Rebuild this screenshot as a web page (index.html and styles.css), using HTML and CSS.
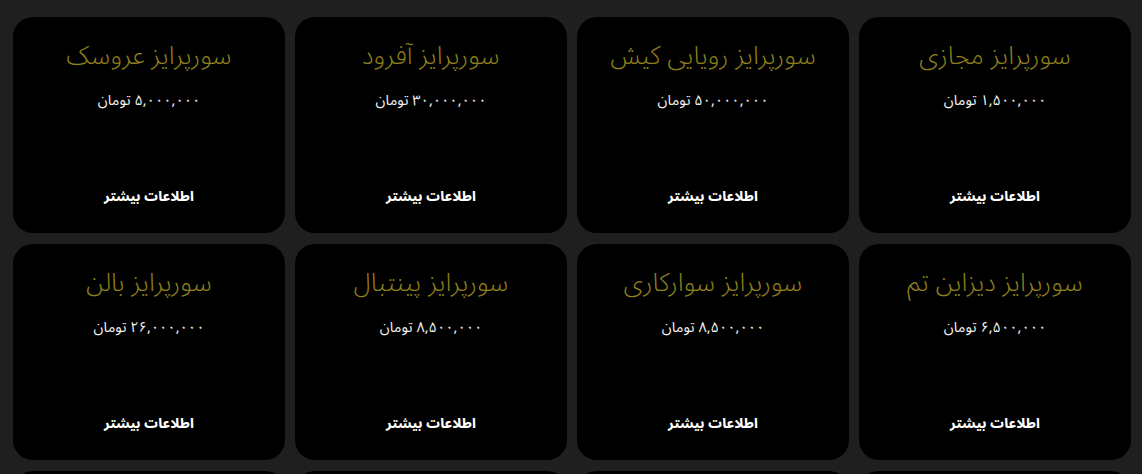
FILE: index.html
```html
<!DOCTYPE html>
<html lang="fa" dir="rtl">
<head>
<meta charset="utf-8">
<title>سورپرایز</title>
<link rel="stylesheet" href="styles.css">
</head>
<body>
<main class="grid">
  <div class="card"><h2 class="title">سورپرایز مجازی</h2><p class="price">۱,۵۰۰,۰۰۰ تومان</p><a class="more" href="#">اطلاعات بیشتر</a></div>
  <div class="card"><h2 class="title">سورپرایز رویایی کیش</h2><p class="price">۵۰,۰۰۰,۰۰۰ تومان</p><a class="more" href="#">اطلاعات بیشتر</a></div>
  <div class="card"><h2 class="title">سورپرایز آفرود</h2><p class="price">۳۰,۰۰۰,۰۰۰ تومان</p><a class="more" href="#">اطلاعات بیشتر</a></div>
  <div class="card"><h2 class="title">سورپرایز عروسک</h2><p class="price">۵,۰۰۰,۰۰۰ تومان</p><a class="more" href="#">اطلاعات بیشتر</a></div>
  <div class="card"><h2 class="title">سورپرایز دیزاین تم</h2><p class="price">۶,۵۰۰,۰۰۰ تومان</p><a class="more" href="#">اطلاعات بیشتر</a></div>
  <div class="card"><h2 class="title">سورپرایز سوارکاری</h2><p class="price">۸,۵۰۰,۰۰۰ تومان</p><a class="more" href="#">اطلاعات بیشتر</a></div>
  <div class="card"><h2 class="title">سورپرایز پینتبال</h2><p class="price">۸,۵۰۰,۰۰۰ تومان</p><a class="more" href="#">اطلاعات بیشتر</a></div>
  <div class="card"><h2 class="title">سورپرایز بالن</h2><p class="price">۲۶,۰۰۰,۰۰۰ تومان</p><a class="more" href="#">اطلاعات بیشتر</a></div>
  <div class="card"></div>
  <div class="card"></div>
  <div class="card"></div>
  <div class="card"></div>
</main>
</body>
</html>
```

FILE: styles.css
```css
html, body {
  margin: 0;
  padding: 0;
  background: #1f1f1f;
  overflow: hidden;
}
body {
  font-family: "Noto Sans Arabic", "DejaVu Sans", sans-serif;
}
.grid {
  display: grid;
  grid-template-columns: repeat(4, 272px);
  gap: 11px 10px;
  padding: 17px 11px 0 13px;
  direction: rtl;
}
.card {
  background: #000;
  border-radius: 20px;
  height: 216px;
  box-sizing: border-box;
  display: flex;
  flex-direction: column;
  align-items: center;
  padding: 21px 12px 24px;
}
.title {
  margin: 0;
  font-size: 25.5px;
  line-height: 36px;
  font-weight: 300;
  color: #8f801c;
  white-space: nowrap;
}
.price {
  margin: 15px 0 0;
  font-size: 14.5px;
  line-height: 24px;
  color: #f2f2f2;
}
.more {
  margin-top: auto;
  font-size: 13.5px;
  line-height: 24px;
  font-weight: 800;
  color: #fff;
  text-decoration: none;
}
```
